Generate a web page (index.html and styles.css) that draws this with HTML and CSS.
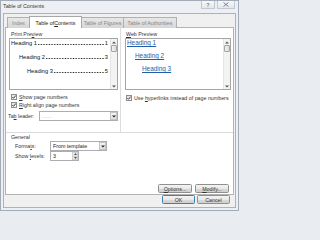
FILE: index.html
```html
<!DOCTYPE html>
<html>
<head>
<meta charset="utf-8">
<title>Table of Contents</title>
<link rel="stylesheet" href="styles.css">
</head>
<body>
<div class="window">
  <div class="titlebar">
    <span class="title">Table of Contents</span>
    <div class="caption-btns">
      <span class="cbtn help">?</span>
      <span class="cbtn close"><svg width="6" height="5" viewBox="0 0 6 5"><path d="M0.5 0.5 L5.5 4.5 M5.5 0.5 L0.5 4.5" stroke="#7a8490" stroke-width="1" fill="none"/></svg></span>
    </div>
  </div>
  <div class="client">
    <div class="tabs">
      <div class="tab t-index">Index</div>
      <div class="tab active t-toc">Table of <u>C</u>ontents</div>
      <div class="tab t-fig">Table of Figures</div>
      <div class="tab t-auth">Table of Authorities</div>
    </div>
    <div class="panel">
      <div class="top">
        <div class="col left">
          <div class="label">Print Pre<u>v</u>iew</div>
          <div class="preview">
            <div class="pv-content">
              <div class="toc l1"><span>Heading 1</span><span class="dots"></span><span>1</span></div>
              <div class="toc l2"><span>Heading 2</span><span class="dots"></span><span>3</span></div>
              <div class="toc l3"><span>Heading 3</span><span class="dots"></span><span>5</span></div>
            </div>
            <div class="scrollbar">
              <div class="sarrow"><svg width="4" height="3" viewBox="0 0 4 3"><polygon points="0,2.5 4,2.5 2,0.5" fill="#555"/></svg></div>
              <div class="thumb"></div>
              <div class="sarrow bottom"><svg width="4" height="3" viewBox="0 0 4 3"><polygon points="0,0.5 4,0.5 2,2.5" fill="#555"/></svg></div>
            </div>
          </div>
          <div class="check first"><span class="box"><svg width="4" height="4" viewBox="0 0 4 4"><polyline points="0.3,2 1.5,3.3 3.7,0.6" stroke="#2b2b2b" stroke-width="0.9" fill="none"/></svg></span><span><u>S</u>how page numbers</span></div>
          <div class="check"><span class="box"><svg width="4" height="4" viewBox="0 0 4 4"><polyline points="0.3,2 1.5,3.3 3.7,0.6" stroke="#2b2b2b" stroke-width="0.9" fill="none"/></svg></span><span><u>R</u>ight align page numbers</span></div>
          <div class="field tableader">
            <span class="flabel">Ta<u>b</u> leader:</span>
            <div class="select sel-leader"><span class="seltext faint">.......</span><span class="drop"><svg width="4" height="3" viewBox="0 0 4 3"><polygon points="0,0.5 4,0.5 2,2.5" fill="#222"/></svg></span></div>
          </div>
        </div>
        <div class="col right">
          <div class="label"><u>W</u>eb Preview</div>
          <div class="preview web">
            <div class="pv-content">
              <div class="link w1">Heading 1</div>
              <div class="link w2">Heading 2</div>
              <div class="link w3">Heading 3</div>
            </div>
            <div class="scrollbar">
              <div class="sarrow"><svg width="4" height="3" viewBox="0 0 4 3"><polygon points="0,2.5 4,2.5 2,0.5" fill="#555"/></svg></div>
              <div class="thumb"></div>
              <div class="sarrow bottom"><svg width="4" height="3" viewBox="0 0 4 3"><polygon points="0,0.5 4,0.5 2,2.5" fill="#555"/></svg></div>
            </div>
          </div>
          <div class="check webcheck"><span class="box"><svg width="4" height="4" viewBox="0 0 4 4"><polyline points="0.3,2 1.5,3.3 3.7,0.6" stroke="#2b2b2b" stroke-width="0.9" fill="none"/></svg></span><span>Use <u>h</u>yperlinks instead of page numbers</span></div>
        </div>
      </div>
      <div class="general">
        <div class="glabel">General</div>
        <div class="field grow">
          <span class="flabel wide">Forma<u>t</u>s:</span>
          <div class="select sel-format"><span class="seltext">From template</span><span class="drop"><svg width="4" height="3" viewBox="0 0 4 3"><polygon points="0,0.5 4,0.5 2,2.5" fill="#222"/></svg></span></div>
        </div>
        <div class="field grow">
          <span class="flabel wide">Show <u>l</u>evels:</span>
          <div class="spinner"><span class="seltext">3</span><span class="spin"><span class="sp"><svg width="3" height="2" viewBox="0 0 3 2"><polygon points="0,2 3,2 1.5,0" fill="#555"/></svg></span><span class="sp"><svg width="3" height="2" viewBox="0 0 3 2"><polygon points="0,0 3,0 1.5,2" fill="#555"/></svg></span></span></div>
        </div>
      </div>
      <div class="btnrow">
        <span class="btn"><u>O</u>ptions...</span>
        <span class="btn"><u>M</u>odify...</span>
      </div>
    </div>
    <div class="footer">
      <span class="btn default">OK</span>
      <span class="btn">Cancel</span>
    </div>
  </div>
</div>
</body>
</html>
```
FILE: styles.css
```css
* { box-sizing: border-box; margin: 0; padding: 0; }
html, body { width: 239px; height: 211px; overflow: hidden; }
body {
  font-family: "Liberation Sans", Arial, sans-serif;
  font-size: 5.3px;
  color: #333;
  background: #e9edf1;
}
u { text-decoration: underline; text-underline-offset: 0.5px; }

.window {
  width: 239px;
  height: 211px;
  border: 1px solid #a3acb6;
  background: #eceff3;
  padding: 0 2px 2px 2px;
  display: flex;
  flex-direction: column;
}
.titlebar {
  height: 12px;
  flex: none;
  display: flex;
  justify-content: space-between;
  align-items: flex-start;
  padding-right: 1px;
}
.title { line-height: 10px; color: #3a3a3a; }
.caption-btns { display: flex; gap: 2px; }
.cbtn {
  height: 8px;
  border: 1px solid #c2c9d1;
  border-top: none;
  background: linear-gradient(#f7f8fa, #e3e7ec);
  display: flex;
  align-items: center;
  justify-content: center;
  color: #7a8490;
  font-size: 5.5px;
  font-weight: bold;
}
.help { width: 14px; }
.close { width: 18px; }

.client {
  flex: 1;
  border: 1px solid #aab3bd;
  background: #f0f0f0;
  display: flex;
  flex-direction: column;
}
.tabs {
  display: flex;
  align-items: flex-end;
  height: 12px;
  margin-top: 2px;
  padding-left: 3px;
  flex: none;
  position: relative;
  z-index: 1;
}
.tab {
  height: 11px;
  border: 1px solid #b0b0b0;
  border-bottom: none;
  background: linear-gradient(#e8e8e8, #d6d6d6);
  color: #858585;
  display: flex;
  align-items: center;
  justify-content: center;
  white-space: nowrap;
}
.tab + .tab { margin-left: -1px; }
.tab.active {
  height: 12px;
  background: #fff;
  color: #222;
  border-color: #a8a8a8;
  position: relative;
  z-index: 2;
}
.t-index { width: 23px; }
.t-toc { width: 53px; }
.t-fig { width: 43px; }
.t-auth { width: 54px; }

.panel {
  margin: -1px 1px 0 1px;
  height: 168px;
  flex: none;
  background: #fff;
  border: 1px solid #b3b3b3;
  display: flex;
  flex-direction: column;
}
.top {
  height: 105px;
  flex: none;
  display: flex;
  border-bottom: 1px solid #dcdcdc;
}
.col { display: flex; flex-direction: column; }
.col.left { width: 115px; border-right: 1px solid #dcdcdc; }
.col.right { flex: 1; }
.label {
  height: 8px;
  line-height: 8px;
  margin-top: 2px;
  padding-left: 5px;
  color: #333;
}
.preview {
  height: 52px;
  border: 1px solid #a5a5a5;
  display: flex;
  margin-left: 3px;
  width: 109px;
  background: #fff;
}
.preview.web { margin-left: 4px; width: 106px; }
.pv-content { flex: 1; min-width: 0; padding: 0 2px 0 1px; overflow: hidden; }
.toc {
  display: flex;
  height: 8px;
  line-height: 8px;
  margin-bottom: 6px;
  font-size: 5.7px;
  color: #111;
  white-space: nowrap;
}
.toc.l2 { padding-left: 8px; }
.toc.l3 { padding-left: 16px; }
.dots {
  flex: 1;
  min-width: 0;
  margin: 0 0.5px 0 0.6px;
  background-image: linear-gradient(to right, #222 0.65px, transparent 0.65px);
  background-size: 1.6px 0.65px;
  background-repeat: repeat-x;
  background-position: 0 5.3px;
}
.link {
  height: 8px;
  line-height: 8px;
  margin-bottom: 5px;
  font-size: 6.4px;
  color: #1f5ea8;
  text-decoration: underline;
  text-underline-offset: 0.6px;
  white-space: nowrap;
}
.link.w2 { padding-left: 8px; }
.link.w3 { padding-left: 15px; }

.scrollbar {
  width: 7px;
  flex: none;
  background: #f3f3f3;
  border-left: 1px solid #e4e4e4;
  display: flex;
  flex-direction: column;
  align-items: center;
}
.sarrow { height: 6px; display: flex; align-items: center; justify-content: center; }
.sarrow.bottom { margin-top: auto; }
.thumb {
  width: 6px;
  height: 7px;
  border: 1px solid #a4a4a4;
  border-radius: 1px;
  background: linear-gradient(90deg, #f0f0f0, #dcdcdc);
}

.check {
  display: flex;
  align-items: center;
  height: 8px;
  padding-left: 5px;
  gap: 1px;
  color: #333;
  white-space: nowrap;
}
.check.first { margin-top: 3px; }
.check.webcheck { margin-top: 4px; }
.box {
  width: 6px;
  height: 6px;
  border: 1px solid #8e8f8f;
  background: linear-gradient(#e2e2e2, #fbfbfb);
  display: flex;
  align-items: center;
  justify-content: center;
  flex: none;
  margin-right: 1px;
}

.field {
  display: flex;
  align-items: center;
  height: 10px;
  white-space: nowrap;
}
.tableader { margin-top: 2px; padding-left: 2px; }
.flabel { width: 31px; flex: none; }
.flabel.wide { width: 35px; }
.select, .spinner {
  height: 10px;
  border: 1px solid #abadb3;
  background: #fff;
  display: flex;
  align-items: stretch;
}
.sel-leader { width: 79px; }
.sel-format { width: 57px; }
.spinner { width: 29px; }
.seltext { flex: 1; padding-left: 2px; line-height: 8px; color: #222; }
.seltext.faint { color: #b0b0b0; }
.drop {
  width: 7px;
  flex: none;
  border: 1px solid #c4c4c4;
  background: linear-gradient(#f6f6f6, #dedede);
  display: flex;
  align-items: center;
  justify-content: center;
}
.spin { width: 6px; flex: none; display: flex; flex-direction: column; }
.sp {
  flex: 1;
  border: 1px solid #d0d0d0;
  background: linear-gradient(#f6f6f6, #e4e4e4);
  display: flex;
  align-items: center;
  justify-content: center;
}
.sp + .sp { border-top: none; }

.general { padding-left: 5px; }
.glabel { height: 8px; line-height: 8px; color: #333; }
.grow { padding-left: 4px; }
.grow:first-of-type { margin-top: 1px; }

.btnrow {
  margin-top: auto;
  display: flex;
  justify-content: flex-end;
  gap: 3px;
  padding-right: 4px;
  padding-bottom: 1px;
}
.btn {
  width: 34px;
  height: 9px;
  border: 1px solid #8f8f8f;
  border-radius: 1.5px;
  background: linear-gradient(#f4f4f4, #e9e9e9 50%, #dadada 51%, #cfcfcf);
  display: flex;
  align-items: center;
  justify-content: center;
  color: #333;
  white-space: nowrap;
}
.footer {
  flex: 1;
  display: flex;
  justify-content: flex-end;
  align-items: flex-start;
  gap: 2px;
  padding-right: 5px;
}
.footer .btn { width: 33px; }
.btn.default { border-color: #3c7fb1; }
```
